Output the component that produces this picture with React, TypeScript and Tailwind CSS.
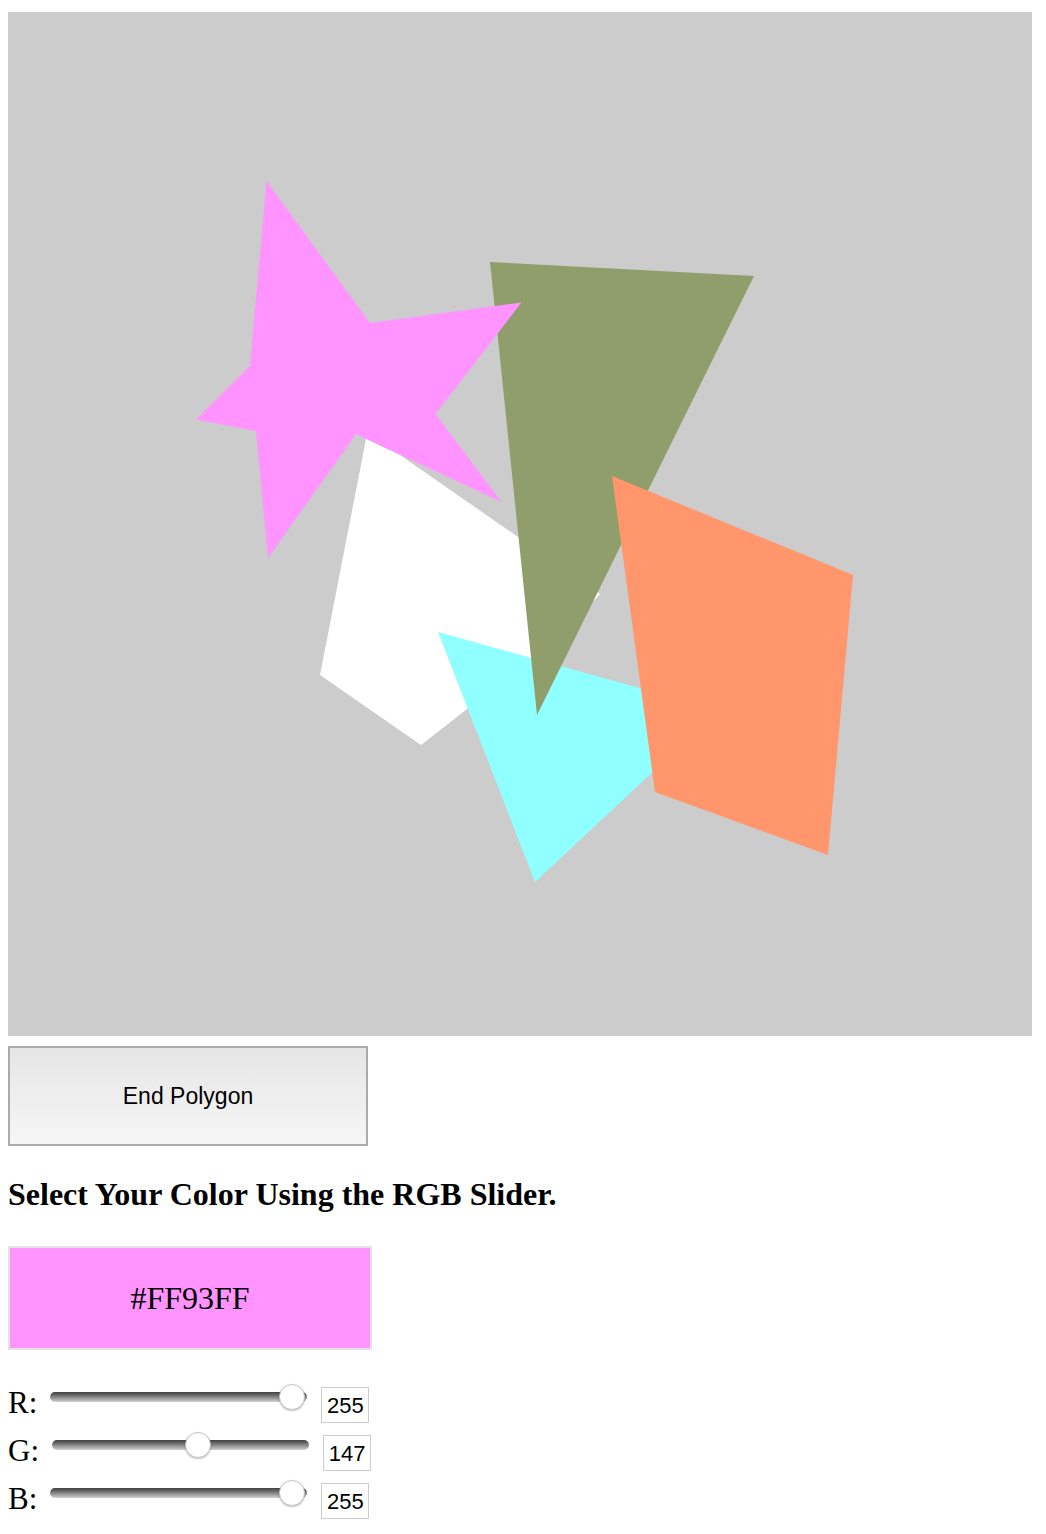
import React from 'react'

const shapes = [
  { fill: '#ffffff', points: '358,427 392,443 592,582 532,648 472,687 413,733 312,663' },
  { fill: '#90ffff', points: '430,620 711,698 527,870' },
  { fill: '#909e6c', points: '482,250 746,264 529,703' },
  { fill: '#ff966c', points: '604,464 845,563 820,843 647,780' },
  {
    fill: '#ff93ff',
    points: '258.5,169 362,311 513.5,290.5 427.5,402 493.5,490 348,422 260,546 248,419 188,407.5 242,354',
  },
]

const rows = [
  { label: 'R', value: 255 },
  { label: 'G', value: 147 },
  { label: 'B', value: 255 },
]

const Slider = ({ value }: { value: number }) => {
  const left = 3 + (value / 255) * 226
  return (
    <div className="relative mt-[5px] ml-[13px] h-[10px] w-[257px] rounded-full bg-gradient-to-b from-[#3f3f3f] to-[#d2d2d2]">
      <div
        className="absolute top-[-8px] h-[26px] w-[26px] rounded-full border border-[#c4c4c4] bg-white shadow-[0_1px_2px_rgba(0,0,0,0.25)]"
        style={{ left }}
      />
    </div>
  )
}

export default function App() {
  return (
    <div className="bg-white px-[8px] pt-[12px] pb-[14px]">
      <div className="h-[1024px] w-[1024px] bg-[#cccccc]">
        <svg width="1024" height="1024" viewBox="0 0 1024 1024">
          {shapes.map((s, i) => (
            <polygon key={i} points={s.points} fill={s.fill} />
          ))}
        </svg>
      </div>

      <button className="mt-[10px] flex h-[100px] w-[360px] items-center justify-center border-2 border-[#ababab] bg-gradient-to-b from-[#e6e6e6] to-[#f6f6f6] font-['Liberation_Sans',sans-serif] text-[23px] text-black">
        End Polygon
      </button>

      <h3 className="mt-[32px] font-['Liberation_Serif',serif] text-[32px] leading-none font-bold text-black">
        Select Your Color Using the RGB Slider.
      </h3>

      <div className="mt-[36px] flex h-[104px] w-[364px] items-center justify-center border-2 border-[#e2e2e2] bg-[#ff93ff] font-['Liberation_Serif',serif] text-[32px] text-black">
        #FF93FF
      </div>

      <div className="mt-[37px] flex flex-col gap-[12px]">
        {rows.map((r) => (
          <div key={r.label} className="flex h-[36px] items-start">
            <span className="font-['Liberation_Serif',serif] text-[31px] leading-none text-black">{r.label}:</span>
            <Slider value={r.value} />
            <div className="ml-[14px] flex h-[36px] w-[48px] items-center justify-center border border-[#cccccc] bg-white font-['Liberation_Sans',sans-serif] text-[22px] text-black">
              {r.value}
            </div>
          </div>
        ))}
      </div>
    </div>
  )
}
